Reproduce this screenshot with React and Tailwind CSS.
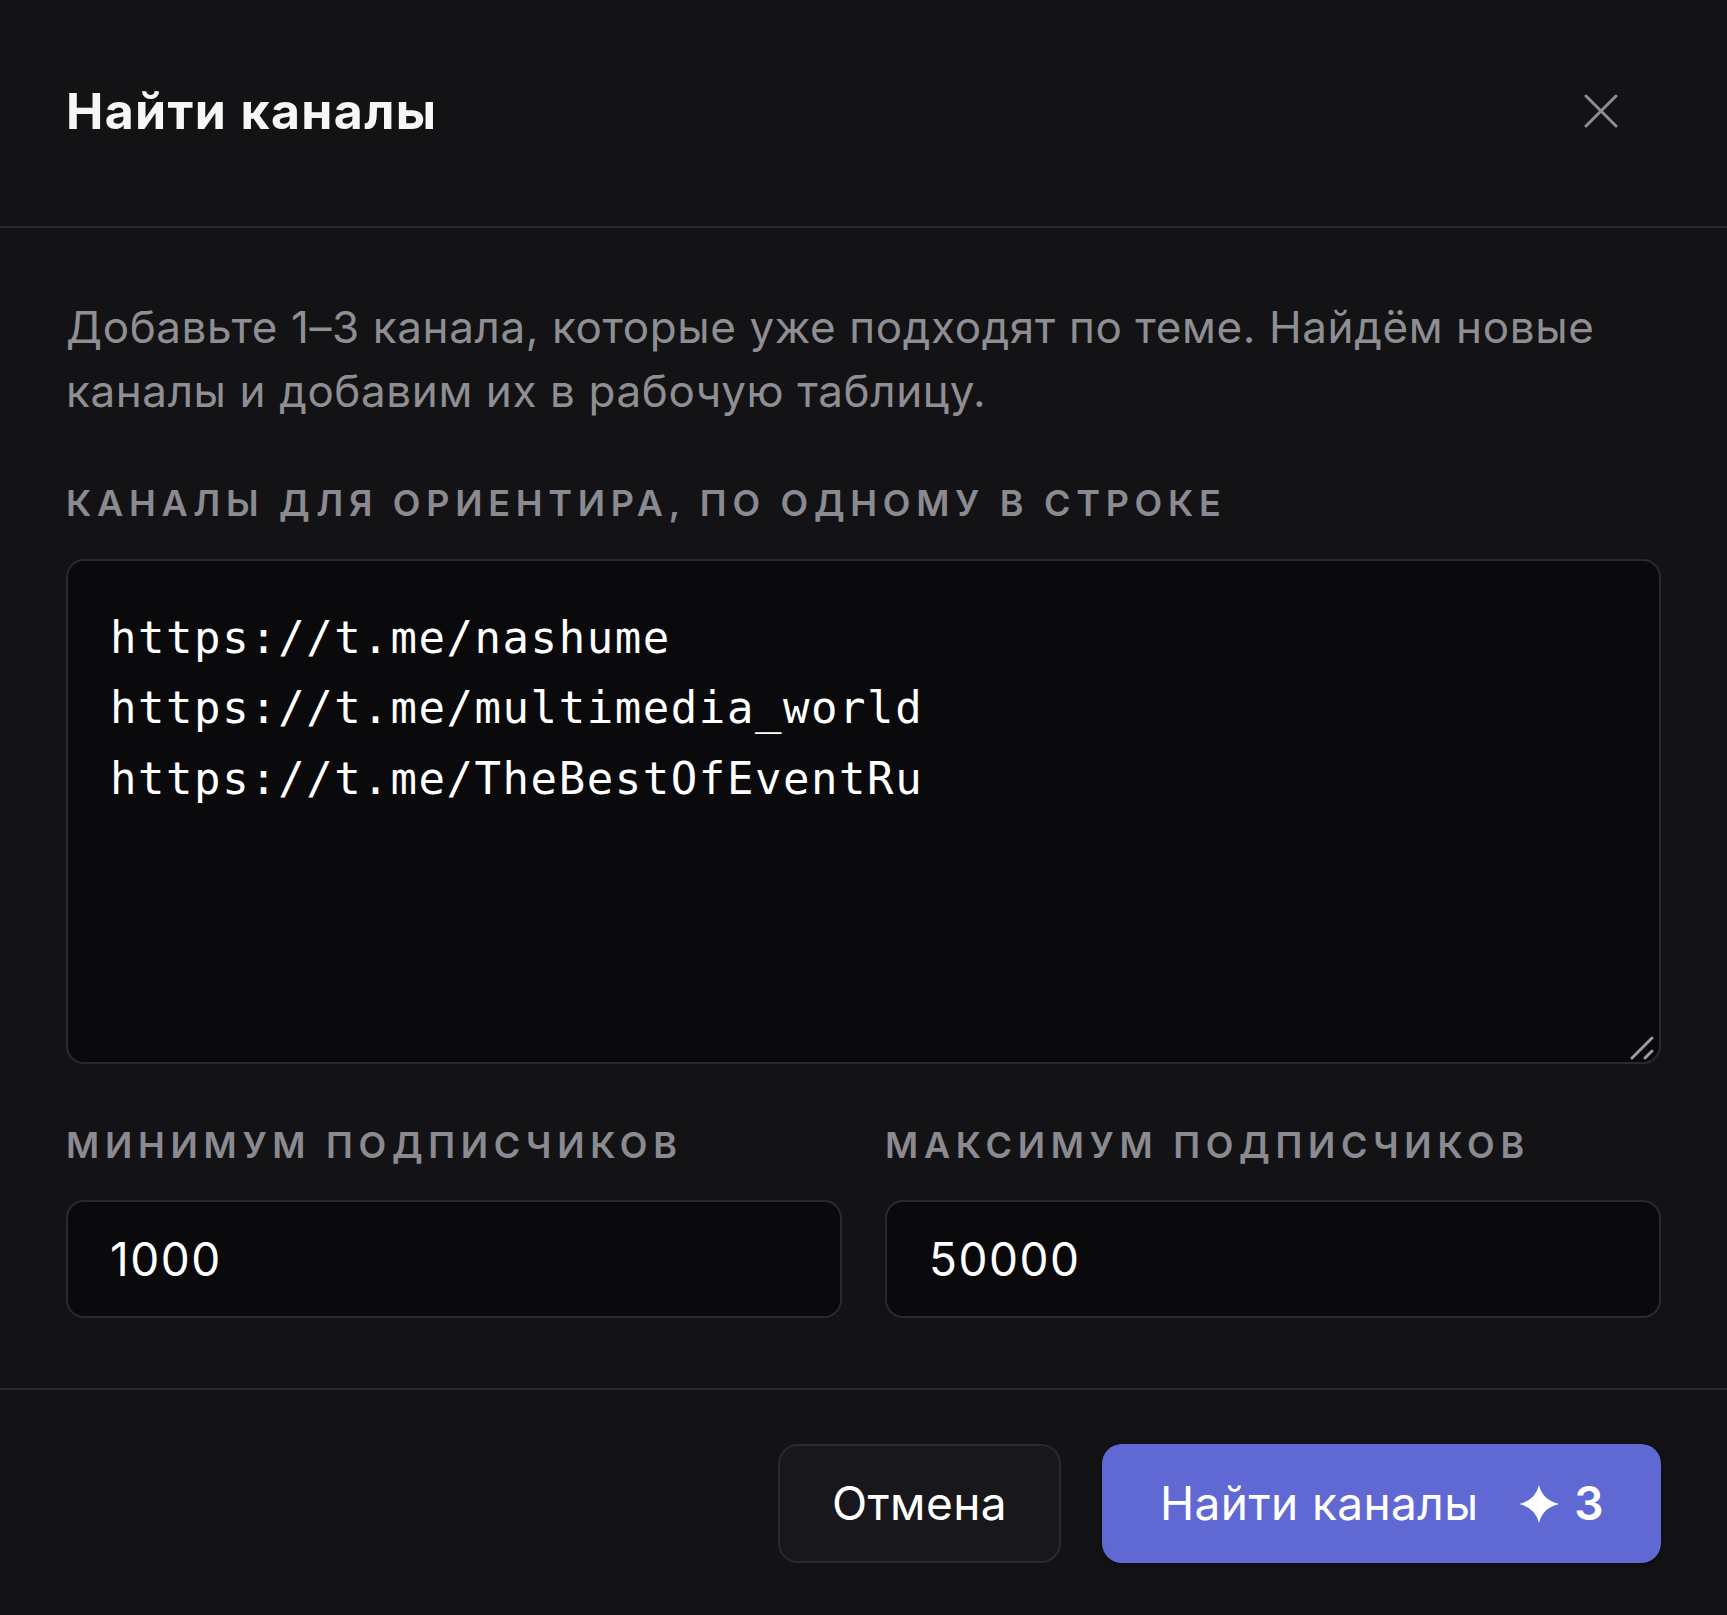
import React from "react";

function CloseIcon() {
  return (
    <svg width="34" height="34" viewBox="0 0 34 34" fill="none">
      <path d="M2 2 L32 32 M32 2 L2 32" stroke="#8e8e93" strokeWidth="3" strokeLinecap="round" />
    </svg>
  );
}

function Sparkle() {
  return (
    <svg width="40" height="38" viewBox="0 0 40 38" fill="white">
      <path d="M20 0 Q23.5 15 40 19 Q23.5 23 20 38 Q16.5 23 0 19 Q16.5 15 20 0 Z" />
    </svg>
  );
}

function ResizeHandle() {
  return (
    <svg width="26" height="24" viewBox="0 0 26 24" fill="none">
      <path d="M2 22 L22 2 M15 22 L22 15" stroke="#9a9a9f" strokeWidth="3" strokeLinecap="round" />
    </svg>
  );
}

export default function App() {
  const sans = { fontFamily: "Inter, 'Noto Sans', 'Liberation Sans', sans-serif" };
  return (
    <div className="w-full min-h-[1615px] bg-[#131315] flex flex-col" style={sans}>
      <div className="h-[228px] flex items-center justify-between pl-[66px] pr-[109px] border-b-2 border-[#2a2a2e] pb-[4px]">
        <h1 className="text-[50px] font-bold text-[#f7f7f8] tracking-[1.35px]">Найти каналы</h1>
        <button className="w-[34px] h-[34px] flex items-center justify-center">
          <CloseIcon />
        </button>
      </div>

      <div className="px-[66px] pt-[67px] pb-[70px] flex flex-col">
        <p className="text-[44px] leading-[64px] text-[#8e8e93] tracking-[0.6px]">
          Добавьте 1–3 канала, которые уже подходят по теме. Найдём новые каналы и добавим их в рабочую таблицу.
        </p>

        <div className="mt-[60px] text-[36px] leading-[40px] font-semibold tracking-[5.7px] text-[#8a8a90]">
          КАНАЛЫ ДЛЯ ОРИЕНТИРА, ПО ОДНОМУ В СТРОКЕ
        </div>

        <div className="relative mt-[36px]">
          <textarea
            readOnly
            defaultValue={"https://t.me/nashume\nhttps://t.me/multimedia_world\nhttps://t.me/TheBestOfEventRu"}
            className="block h-[505px] w-full rounded-[18px] border-2 border-[#2a2a2e] bg-[#0a0a0c] p-[42px] text-[44px] leading-[70.4px] text-white resize-none outline-none"
            style={{ fontFamily: "'DejaVu Sans Mono', 'Liberation Mono', monospace", letterSpacing: "1.55px" }}
          />
          <div className="absolute right-[5px] bottom-[4px] pointer-events-none">
            <ResizeHandle />
          </div>
        </div>

        <div className="mt-[61px] grid grid-cols-2 gap-x-[43px]">
          <div className="flex flex-col">
            <div className="text-[36px] leading-[40px] font-semibold tracking-[5.7px] text-[#8a8a90]">
              МИНИМУМ ПОДПИСЧИКОВ
            </div>
            <div className="mt-[35px] h-[118px] rounded-[18px] border-2 border-[#2a2a2e] bg-[#0a0a0c] flex items-center px-[42px]">
              <span className="text-[46px] text-white tracking-[1.5px]">1000</span>
            </div>
          </div>
          <div className="flex flex-col">
            <div className="text-[36px] leading-[40px] font-semibold tracking-[5.7px] text-[#8a8a90]">
              МАКСИМУМ ПОДПИСЧИКОВ
            </div>
            <div className="mt-[35px] h-[118px] rounded-[18px] border-2 border-[#2a2a2e] bg-[#0a0a0c] flex items-center px-[42px]">
              <span className="text-[46px] text-white tracking-[1.5px]">50000</span>
            </div>
          </div>
        </div>
      </div>

      <div className="border-t-2 border-[#2a2a2e] flex justify-end gap-[41px] px-[66px] pt-[54px] pb-[52px]">
        <button className="h-[119px] w-[283px] rounded-[20px] border-2 border-[#2a2a2e] bg-[#18181c] text-[46px] tracking-[0.4px] text-white flex items-center justify-center">
          Отмена
        </button>
        <button className="h-[119px] w-[559px] rounded-[20px] bg-[#6069d3] text-[46px] tracking-[0.4px] text-white flex items-center pl-[58px] pr-[57px] shadow-[0_2px_6px_rgba(0,0,0,0.35)]">
          <span>Найти каналы</span>
          <span className="ml-auto flex items-center gap-[15px]">
            <Sparkle />
            <span className="font-semibold">3</span>
          </span>
        </button>
      </div>
    </div>
  );
}
